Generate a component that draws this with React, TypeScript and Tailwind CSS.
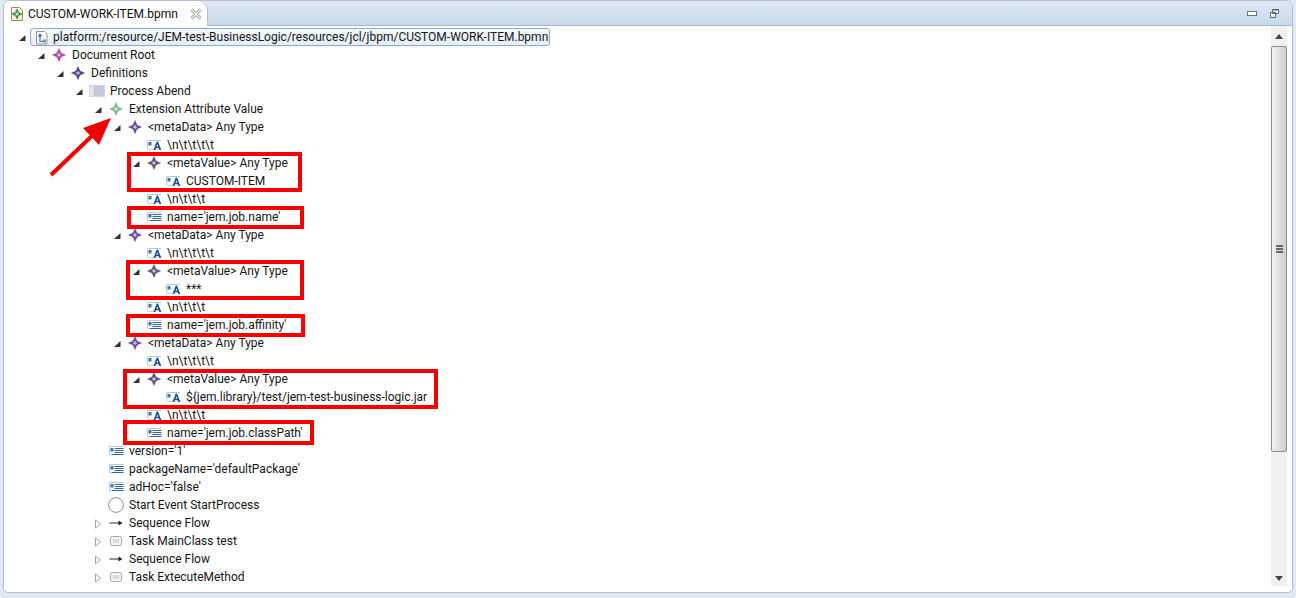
import React from "react";

type Kind = "file" | "diamond" | "pane" | "text" | "attr" | "circle" | "flow" | "task";
type Row = { level: number; twisty?: "open" | "closed"; kind: Kind; color?: string; label: string; selected?: boolean };

const PINK = "#a8489c";
const NAVY = "#47478a";
const GREEN = "#7fb98a";
const PURPLE = "#6a4a9c";
const GREY = "#5c5578";

const rows: Row[] = [
  { level: 0, twisty: "open", kind: "file", label: "platform:/resource/JEM-test-BusinessLogic/resources/jcl/jbpm/CUSTOM-WORK-ITEM.bpmn", selected: true },
  { level: 1, twisty: "open", kind: "diamond", color: PINK, label: "Document Root" },
  { level: 2, twisty: "open", kind: "diamond", color: NAVY, label: "Definitions" },
  { level: 3, twisty: "open", kind: "pane", label: "Process Abend" },
  { level: 4, twisty: "open", kind: "diamond", color: GREEN, label: "Extension Attribute Value" },
  { level: 5, twisty: "open", kind: "diamond", color: PURPLE, label: "<metaData> Any Type" },
  { level: 6, kind: "text", label: "\\n\\t\\t\\t\\t" },
  { level: 6, twisty: "open", kind: "diamond", color: GREY, label: "<metaValue> Any Type" },
  { level: 7, kind: "text", label: "CUSTOM-ITEM" },
  { level: 6, kind: "text", label: "\\n\\t\\t\\t" },
  { level: 6, kind: "attr", label: "name='jem.job.name'" },
  { level: 5, twisty: "open", kind: "diamond", color: PURPLE, label: "<metaData> Any Type" },
  { level: 6, kind: "text", label: "\\n\\t\\t\\t\\t" },
  { level: 6, twisty: "open", kind: "diamond", color: GREY, label: "<metaValue> Any Type" },
  { level: 7, kind: "text", label: "***" },
  { level: 6, kind: "text", label: "\\n\\t\\t\\t" },
  { level: 6, kind: "attr", label: "name='jem.job.affinity'" },
  { level: 5, twisty: "open", kind: "diamond", color: PURPLE, label: "<metaData> Any Type" },
  { level: 6, kind: "text", label: "\\n\\t\\t\\t\\t" },
  { level: 6, twisty: "open", kind: "diamond", color: GREY, label: "<metaValue> Any Type" },
  { level: 7, kind: "text", label: "${jem.library}/test/jem-test-business-logic.jar" },
  { level: 6, kind: "text", label: "\\n\\t\\t\\t" },
  { level: 6, kind: "attr", label: "name='jem.job.classPath'" },
  { level: 4, kind: "attr", label: "version='1'" },
  { level: 4, kind: "attr", label: "packageName='defaultPackage'" },
  { level: 4, kind: "attr", label: "adHoc='false'" },
  { level: 4, kind: "circle", label: "Start Event StartProcess" },
  { level: 4, twisty: "closed", kind: "flow", label: "Sequence Flow" },
  { level: 4, twisty: "closed", kind: "task", label: "Task MainClass test" },
  { level: 4, twisty: "closed", kind: "flow", label: "Sequence Flow" },
  { level: 4, twisty: "closed", kind: "task", label: "Task ExtecuteMethod" },
];

const redBoxes = [
  "left-[127px] top-[152px] w-[175px] h-[40px]",
  "left-[127px] top-[206px] w-[177px] h-[23px]",
  "left-[126px] top-[260px] w-[178px] h-[40px]",
  "left-[126px] top-[314px] w-[179px] h-[23px]",
  "left-[123px] top-[369px] w-[315px] h-[40px]",
  "left-[123px] top-[420px] w-[191px] h-[25px]",
];

function Twisty({ state }: { state?: "open" | "closed" }) {
  if (!state) return <span className="w-4 shrink-0" />;
  return (
    <svg width="16" height="16" viewBox="0 0 16 16" className="shrink-0">
      {state === "open" ? (
        <polygon points="9.500,6 9.500,12 3,12" fill="#333" />
      ) : (
        <polygon points="3.500,5 8.500,9 3.500,13" fill="#fff" stroke="#a6a6a6" />
      )}
    </svg>
  );
}

function Icon({ kind, color }: { kind: Kind; color?: string }) {
  const c = color ?? "#555";
  switch (kind) {
    case "diamond":
      return (
        <svg width="16" height="16" viewBox="0 0 16 16">
          <polygon points="8,1.500 10,6 14.500,8 10,10 8,14.500 6,10 1.500,8 6,6" fill={c} stroke={c} strokeWidth=".8" strokeOpacity=".6" />
          <rect x="6.500" y="6.500" width="3" height="3" fill="#fff" fillOpacity=".65" transform="rotate(45 8 8)" />
        </svg>
      );
    case "file":
      return (
        <svg width="16" height="16" viewBox="0 0 16 16">
          <path d="M2.500 2.500h8l2.500 2.500v10h-10.500z" fill="#fbfbf0" stroke="#9a9a80" />
          <circle cx="6" cy="6.500" r="1.700" fill="#3f78b8" />
          <path d="M6 8v4.500h3.500" fill="none" stroke="#3f78b8" strokeWidth="1.200" />
          <rect x="8.500" y="10.500" width="3.500" height="3" fill="#6a96c8" />
        </svg>
      );
    case "pane":
      return (
        <svg width="16" height="16" viewBox="0 0 16 16">
          <rect x=".5" y="2.500" width="15" height="11" fill="#c5c9d9" stroke="#d2d5e0" />
          <rect x="1" y="3" width="3.500" height="10" fill="#e4e6ee" />
        </svg>
      );
    case "text":
      return (
        <svg width="16" height="16" viewBox="0 0 16 16">
          <path d="M1.500 12V3.500H15" fill="none" stroke="#b9c8d8" />
          <path d="M2 12.500h6" stroke="#c4d0dc" />
          <rect x="2.500" y="5" width="3" height="3.500" fill="#2f78c0" />
          <path d="M7.500 13 10.700 4.500H12L15.300 13h-2l-.6-1.800H10L9.400 13zM10.500 9.700h1.700l-.85-2.500z" fill="#1d4f8c" />
        </svg>
      );
    case "attr":
      return (
        <svg width="16" height="16" viewBox="0 0 16 16">
          <path d="M1.500 12.500V3.500H15.500" fill="none" stroke="#b9c8d8" />
          <rect x="2.500" y="5" width="3" height="3.500" fill="#2f78c0" />
          <path d="M6.500 5.500h9M6.500 7.500h9M6.500 9.500h9M3.500 11.500h12" stroke="#33659c" strokeWidth="1" />
        </svg>
      );
    case "circle":
      return (
        <svg width="16" height="16" viewBox="0 0 16 16">
          <circle cx="8" cy="8" r="7.400" fill="#fff" stroke="#8f8f8f" />
        </svg>
      );
    case "flow":
      return (
        <svg width="16" height="16" viewBox="0 0 16 16">
          <path d="M1.500 8h10" stroke="#5a5a5a" strokeWidth="1.300" />
          <polygon points="10.500,5.500 14.500,8 10.500,10.500" fill="#222" />
        </svg>
      );
    case "task":
      return (
        <svg width="16" height="16" viewBox="0 0 16 16">
          <rect x="2.500" y="3.500" width="11" height="9" rx="2" fill="#f3f3f3" stroke="#a8a8a8" />
          <path d="M5 7h6M5 9h6" stroke="#a0a0a0" strokeWidth=".9" strokeDasharray="1 .6" />
        </svg>
      );
  }
}

function TreeRow({ row }: { row: Row }) {
  return (
    <div className="flex h-[18px] items-center" style={{ paddingLeft: 12 + row.level * 19 }}>
      <Twisty state={row.twisty} />
      {row.selected ? (
        <span className="flex items-center h-[18px] -ml-[2px] pl-[3px] pr-[1px] rounded-[3px] border border-[#8aa8d0] bg-gradient-to-b from-[#f4f8fd] to-[#e6eff9]">
          <span className="w-[16px] shrink-0 flex items-center">
            <Icon kind={row.kind} />
          </span>
          <span className="ml-[3px] whitespace-pre">{row.label}</span>
        </span>
      ) : (
        <span className="flex items-center">
          <span className="w-[21px] shrink-0 flex items-center">
            <Icon kind={row.kind} color={row.color} />
          </span>
          <span className="whitespace-pre">{row.label}</span>
        </span>
      )}
    </div>
  );
}

export default function App() {
  return (
    <div className="relative w-[1296px] h-[598px] overflow-hidden bg-[#e3e9f3] pl-[3px] pr-[3px] pb-[5px] text-[12px] leading-[18px] text-[#151515] font-['Roboto','Noto_Sans',sans-serif]">
      <div className="flex flex-col h-full rounded-t-[7px] rounded-b-[5px] overflow-hidden border border-[#b4bfd4] bg-white">
        <div className="flex h-[25px] shrink-0 items-stretch justify-between border-b border-[#a9b6cf] bg-gradient-to-b from-[#dfe9f4] to-[#c6d9ea]">
          <div className="flex items-center w-[204px] -mb-px bg-white rounded-tr-[10px] border-r border-[#b4bfd4] pl-[5px] pr-[5px] gap-[3px]">
            <svg width="16" height="16" viewBox="0 0 16 16" className="shrink-0">
              <path d="M2.500 1.500h8l3 3v10h-11z" fill="#f6f1d8" stroke="#8f8a68" />
              <polygon points="8,3 9.500,6.500 13,8 9.500,9.500 8,13 6.500,9.500 3,8 6.500,6.500" fill="#3f9a45" stroke="#2a6f34" strokeWidth=".6" />
              <circle cx="8" cy="8" r="1.600" fill="#bfe8b8" />
            </svg>
            <span className="whitespace-pre text-[#111]">CUSTOM-WORK-ITEM.bpmn</span>
            <svg width="12" height="12" viewBox="0 0 12 12" className="ml-auto shrink-0">
              <path d="M1.500 1.500l9 9M10.500 1.500l-9 9" stroke="#8a8f94" strokeWidth="3" />
              <path d="M1.500 1.500l9 9M10.500 1.500l-9 9" stroke="#fff" strokeWidth="1.200" />
            </svg>
          </div>
          <div className="flex items-center gap-[13px] pr-[13px]">
            <span className="w-[10px] h-[5px] border border-[#6b7480] bg-white" />
            <svg width="9" height="9" viewBox="0 0 9 9">
              <path d="M2.500.5h6v4h-6zM.5 3.500h5v5h-5z" fill="#fff" stroke="#5a6470" />
              <path d="M2.500 1h6" stroke="#5a6470" />
            </svg>
          </div>
        </div>
        <div className="flex flex-1 min-h-0 pr-[5px] pb-[6px]">
          <div className="flex-1 min-w-0 overflow-hidden pt-[2px]">
            {rows.map((r, i) => (
              <TreeRow key={i} row={r} />
            ))}
          </div>
          <div className="flex flex-col w-[16px] shrink-0 bg-[#f0f0f0]">
            <div className="h-[20px] flex items-center justify-center">
              <svg width="8" height="5" viewBox="0 0 8 5"><polygon points="4,0 8,5 0,5" fill="#444" /></svg>
            </div>
            <div className="h-[406px] flex items-center justify-center border border-[#8f8f8f] rounded-[2px] bg-gradient-to-r from-[#f2f2f2] to-[#cfcfcf]">
              <div className="flex flex-col gap-[1px]">
                <span className="block w-[7px] h-[2px] bg-[#666]" />
                <span className="block w-[7px] h-[2px] bg-[#666]" />
                <span className="block w-[7px] h-[2px] bg-[#666]" />
              </div>
            </div>
            <div className="flex-1" />
            <div className="h-[16px] flex items-center justify-center">
              <svg width="8" height="5" viewBox="0 0 8 5"><polygon points="0,0 8,0 4,5" fill="#444" /></svg>
            </div>
          </div>
        </div>
      </div>

      {redBoxes.map((b) => (
        <div key={b} className={`absolute border-[4px] border-[#f80000] ${b}`} />
      ))}
      <svg className="absolute left-[45px] top-[112px]" width="72" height="68" viewBox="0 0 72 68">
        <path d="M6 63 50 21" stroke="#f00000" strokeWidth="4" />
        <polygon points="66,6 38,16 54,33" fill="#f00000" />
      </svg>
    </div>
  );
}
